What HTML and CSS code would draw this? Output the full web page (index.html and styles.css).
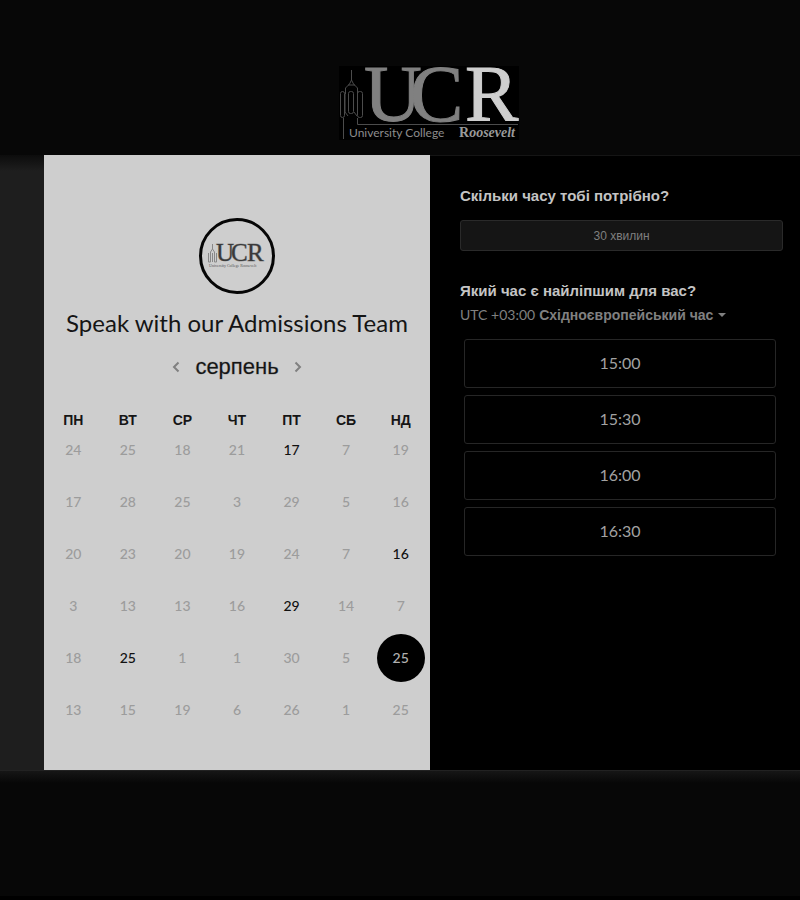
FILE: index.html
```
<!DOCTYPE html>
<html lang="uk">
<head>
<meta charset="utf-8">
<meta name="viewport" content="width=device-width, initial-scale=1">
<title>Speak with our Admissions Team</title>
<link rel="stylesheet" href="styles.css">
</head>
<body>
<header class="banner">
  <svg class="logo" width="180" height="74" viewBox="0 0 180 74" role="img" aria-label="University College Roosevelt">
    <rect width="180" height="74" fill="#000"/>
    <g fill="none" stroke="#4c4c4c" stroke-width="1">
      <path d="M12.500 4v10M12.500 14l-2 4-4 4v6M12.500 14l2 4 4 4v6M9 19h7"/>
      <rect x="1.500" y="25.500" width="4" height="26" rx="2"/>
      <rect x="9.500" y="25.500" width="5" height="22" rx="2"/>
      <rect x="18.500" y="25.500" width="5" height="26" rx="2"/>
      <path d="M6 28v18l3 4M15 46l3 4M4.500 52v21M18.500 52v6.500H179"/>
    </g>
    <g class="logo-letters">
      <text x="25" y="55" fill="#808080" stroke="#808080">U</text>
      <text x="71" y="55" fill="#808080" stroke="#808080">C</text>
      <text x="126" y="55" fill="#cfcfcf" stroke="#cfcfcf">R</text>
    </g>
    <text class="logo-name" x="10" y="71">University College</text>
    <text class="logo-roosevelt" x="120" y="71">R<tspan font-style="italic">oosevelt</tspan></text>
  </svg>
</header>

<main class="scheduler">
  <section class="calendar">
    <div class="avatar">
      <svg width="60" height="26" viewBox="0 0 60 26" role="img" aria-label="UCR">
        <g fill="none" stroke="#888" stroke-width="1">
          <path d="M5.500 1v5l-2 3v9M5.500 6l2 3v9M1.500 10v9h2v-9M9.500 10v9h-2v-9M5.500 10v9"/>
        </g>
        <g class="avatar-letters">
          <text x="9" y="18">U</text>
          <text x="24" y="18">C</text>
          <text x="40" y="18">R</text>
        </g>
        <text class="avatar-name" x="2" y="24">University College Roosevelt</text>
      </svg>
    </div>
    <h1 class="title">Speak with our Admissions Team</h1>
    <div class="month">
      <button class="arrow" type="button" aria-label="Попередній місяць">
        <svg width="8" height="12" viewBox="0 0 8 12"><path d="M6.500 1.500L2 6l4.500 4.500" fill="none" stroke="currentColor" stroke-width="2"/></svg>
      </button>
      <h2 class="month-name">серпень</h2>
      <button class="arrow" type="button" aria-label="Наступний місяць">
        <svg width="8" height="12" viewBox="0 0 8 12"><path d="M1.500 1.500L6 6l-4.500 4.500" fill="none" stroke="currentColor" stroke-width="2"/></svg>
      </button>
    </div>
    <table class="days">
      <thead>
        <tr><th>ПН</th><th>ВТ</th><th>СР</th><th>ЧТ</th><th>ПТ</th><th>СБ</th><th>НД</th></tr>
      </thead>
      <tbody>
        <tr><td>24</td><td>25</td><td>18</td><td>21</td><td><button class="day" type="button">17</button></td><td>7</td><td>19</td></tr>
        <tr><td>17</td><td>28</td><td>25</td><td>3</td><td>29</td><td>5</td><td>16</td></tr>
        <tr><td>20</td><td>23</td><td>20</td><td>19</td><td>24</td><td>7</td><td><button class="day" type="button">16</button></td></tr>
        <tr><td>3</td><td>13</td><td>13</td><td>16</td><td><button class="day" type="button">29</button></td><td>14</td><td>7</td></tr>
        <tr><td>18</td><td><button class="day" type="button">25</button></td><td>1</td><td>1</td><td>30</td><td>5</td><td><button class="day selected" type="button" aria-pressed="true">25</button></td></tr>
        <tr><td>13</td><td>15</td><td>19</td><td>6</td><td>26</td><td>1</td><td>25</td></tr>
      </tbody>
    </table>
  </section>

  <section class="booking">
    <h2 class="question">Скільки часу тобі потрібно?</h2>
    <button class="duration" type="button">30 хвилин</button>
    <h2 class="question">Який час є найліпшим для вас?</h2>
    <div class="timezone">
      <label for="zone">UTC +03:00</label>
      <select id="zone"><option>Східноєвропейський час</option></select>
      <svg width="8" height="4" viewBox="0 0 8 4"><path d="M0 0h8L4 4z" fill="currentColor"/></svg>
    </div>
    <div class="slots">
      <button class="slot" type="button">15:00</button>
      <button class="slot" type="button">15:30</button>
      <button class="slot" type="button">16:00</button>
      <button class="slot" type="button">16:30</button>
    </div>
  </section>
</main>
<footer class="bottom"></footer>
</body>
</html>
```
FILE: styles.css
```
* {
  box-sizing: border-box;
}

body {
  margin: 0;
  min-height: 100vh;
  display: flex;
  flex-direction: column;
  background: #070707;
  font-family: "Liberation Sans", sans-serif;
}

h1,
h2 {
  margin: 0;
}

button {
  padding: 0;
  border: 0;
  background: none;
  font: inherit;
  color: inherit;
  cursor: pointer;
}

.banner {
  display: flex;
  justify-content: center;
  padding: 66px 0 15px 58px;
}

.logo {
  display: block;
  overflow: visible;
}

.logo-letters {
  font: 80px "Liberation Serif", serif;
  stroke-width: 1;
}

.logo-name {
  font: 12px Lato, sans-serif;
  fill: #8c8c8c;
}

.logo-roosevelt {
  font: bold 14px "Liberation Serif", serif;
  fill: #999;
}

.scheduler {
  display: grid;
  grid-template-columns: 386fr 370fr;
  padding-left: 44px;
  background: linear-gradient(#0c0c0c, #1e1e1e 16px, #1e1e1e);
}

.calendar {
  display: flex;
  flex-direction: column;
  align-items: center;
  padding: 63px 2px 22px;
  background: #cecece;
  color: #151515;
}

.avatar {
  display: flex;
  align-items: center;
  justify-content: center;
  width: 76px;
  height: 76px;
  border: 3px solid #060606;
  border-radius: 50%;
}

.avatar svg {
  overflow: visible;
}

.avatar-letters {
  font: 25px "Liberation Serif", serif;
  fill: #3a3a3a;
  stroke: rgba(58, 58, 58, 0.4);
}

.avatar-name {
  font: 4px "Liberation Serif", serif;
  fill: #555;
}

.title {
  margin-top: 13px;
  font: 24px/32px Lato, sans-serif;
  white-space: nowrap;
}

.month {
  display: flex;
  align-items: center;
  gap: 15px;
  margin-top: 14px;
}

.month-name {
  font-size: 22px;
  line-height: 28px;
  font-weight: 400;
  -webkit-text-stroke: 1px rgba(28, 28, 28, 0.25);
}

.arrow {
  display: flex;
  color: #808080;
}

.days {
  width: 100%;
  margin-top: 24px;
  table-layout: fixed;
  border-collapse: collapse;
}

.days th {
  height: 31px;
  padding: 0;
  font-size: 14px;
  line-height: 31px;
}

.days td {
  height: 52px;
  padding: 0;
  vertical-align: top;
  text-align: center;
  font: 500 14px/28px Lato, sans-serif;
  color: #9c9c9c;
}

.day {
  position: relative;
  color: #111;
}

.selected {
  z-index: 0;
  color: #b0b0b0;
}

.selected::before {
  content: "";
  position: absolute;
  z-index: -1;
  top: 50%;
  left: 50%;
  width: 48px;
  height: 48px;
  border-radius: 50%;
  background: #000;
  transform: translate(-50%, -50%);
}

.booking {
  padding: 30px 17px 0 30px;
  border-top: 1px solid #151515;
  background: #000;
  color: #c4c4c4;
}

.question {
  font-size: 15px;
  line-height: 20px;
}

.duration {
  display: block;
  width: 100%;
  height: 31px;
  margin: 14px 0 30px;
  border: 1px solid #2a2a2a;
  border-radius: 3px;
  background: #151515;
  color: #7f7f7f;
  font-size: 12px;
}

.timezone {
  display: flex;
  align-items: center;
  gap: 4px;
  margin-top: 4px;
  color: #808080;
  font: 14px/20px Lato, sans-serif;
}

.timezone select {
  appearance: none;
  padding: 0;
  border: 0;
  background: none;
  color: inherit;
  font: bold 14px/20px "Liberation Sans", sans-serif;
}

.slots {
  display: grid;
  gap: 7px;
  margin-top: 14px;
  padding: 0 7px 0 4px;
}

.slot {
  height: 49px;
  padding-bottom: 2px;
  border: 1px solid #262626;
  border-radius: 3px;
  color: #a2a2a2;
  font: 16px Lato, sans-serif;
}

.bottom {
  flex: 1;
  border-top: 1px solid #222;
  border-bottom: 4px solid #000;
  background: linear-gradient(#161616, #070707 12px);
}
```
